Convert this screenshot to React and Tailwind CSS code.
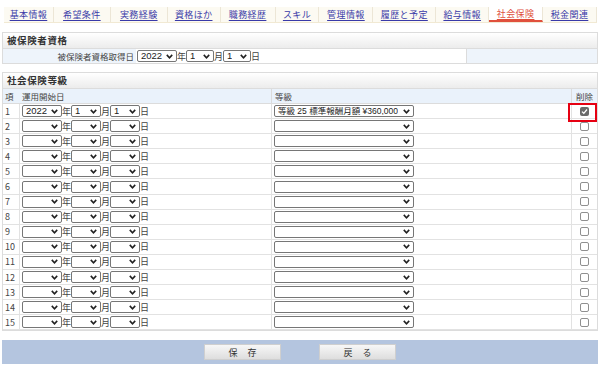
import React from 'react';

const tabs = [
  { label: '基本情報', w: 'w-[50px]' },
  { label: '希望条件', w: 'w-[57px]' },
  { label: '実務経験', w: 'w-[57px]' },
  { label: '資格ほか', w: 'w-[53px]' },
  { label: '職務経歴', w: 'w-[55px]' },
  { label: 'スキル', w: 'w-[44px]' },
  { label: '管理情報', w: 'w-[54px]' },
  { label: '履歴と予定', w: 'w-[63px]' },
  { label: '給与情報', w: 'w-[53px]' },
  { label: '社会保険', w: 'w-[54px]', active: true },
  { label: '税金関連', w: 'w-[54px]' },
];

const Chevron = () => (
  <svg width="7" height="5" viewBox="0 0 7 5" className="shrink-0">
    <path d="M0.8 0.9 L3.5 3.8 L6.2 0.9" fill="none" stroke="#222" strokeWidth="1.6" />
  </svg>
);

const Select = ({ value = '', w, size = 'text-[9.5px]' }) => (
  <div className={`${w} h-[12px] flex items-center justify-between gap-[2px] border border-[#767676] rounded-[2px] bg-white pl-[3px] pr-[3px] leading-none`}>
    <span className={`min-w-0 overflow-hidden whitespace-nowrap ${size} font-['Liberation_Sans','Noto_Sans_CJK_JP',sans-serif] text-[#222]`}>{value}</span>
    <Chevron />
  </div>
);

const DateSelects = ({ y = '', m = '', d = '', yw = 'w-[40px]', mw = 'w-[30px]' }) => (
  <div className="flex items-center leading-none text-[9px]">
    <Select value={y} w={yw} />
    <span>年</span>
    <Select value={m} w={mw} />
    <span>月</span>
    <Select value={d} w={mw} />
    <span>日</span>
  </div>
);

const Checkbox = ({ checked }) =>
  checked ? (
    <div className="w-[9px] h-[9px] rounded-[2px] bg-[#6a6a6a] flex items-center justify-center">
      <svg width="7" height="7" viewBox="0 0 7 7">
        <path d="M1 3.6 L2.8 5.3 L6 1.5" fill="none" stroke="#fff" strokeWidth="1.3" />
      </svg>
    </div>
  ) : (
    <div className="w-[9px] h-[9px] rounded-[2px] border border-[#8f8f8f] bg-white" />
  );

export default function App() {
  const rows = Array.from({ length: 15 }, (_, i) => i + 1);

  return (
    <div className="relative w-[600px] h-[365px] bg-white text-[8.5px] text-[#444] font-['Noto_Sans_CJK_JP',sans-serif] overflow-hidden">
      {/* Tabs */}
      <div className="pt-[7px] pl-[4px] pr-[3px]">
        <div className="flex h-[16px] bg-[#fcfaf2] border-b border-[#f1e9d3]">
          {tabs.map((t) => (
            <div
              key={t.label}
              className={`${t.w} flex items-center justify-center border-r border-[#ece6d6] text-[9px] tracking-[0.4px] leading-none underline underline-offset-[2px] ${
                t.active ? 'bg-white text-[#e0503c] border-b-2 border-b-[#e0503c] decoration-[#e0503c]' : 'text-[#3a3aa8]'
              }`}
            >
              {t.label}
            </div>
          ))}
        </div>
      </div>

      {/* 被保険者資格 */}
      <div className="mx-[2px] mt-[9px] border border-[#dcdcdc]">
        <div className="h-[16px] flex items-center px-[4px] bg-gradient-to-b from-white to-[#ececec] border-b border-[#dcdcdc] font-bold text-[9.5px] tracking-[0.6px] leading-none text-[#333]">
          被保険者資格
        </div>
        <div className="flex h-[14px]">
          <div className="w-[133px] bg-[#eef4fb] flex items-center justify-end pr-[2px] leading-none">
            被保険者資格取得日
          </div>
          <div className="w-[330px] flex items-center pl-[1px]">
            <DateSelects y="2022" m="1" d="1" yw="w-[40px]" mw="w-[28px]" />
          </div>
          <div className="flex-1 bg-[#eef4fb] border-l border-[#dcdcdc]" />
        </div>
      </div>

      {/* 社会保険等級 */}
      <div className="relative mx-[2px] mt-[8px] border border-[#dcdcdc]">
        <div className="h-[16px] flex items-center px-[4px] bg-gradient-to-b from-white to-[#ececec] border-b border-[#dcdcdc] font-bold text-[9.5px] tracking-[0.6px] leading-none text-[#333]">
          社会保険等級
        </div>
        <div className="grid grid-cols-[16px_252px_300px_1fr] h-[15px] bg-[#eaf2fb] border-b border-[#dcdcdc] leading-none">
          <div className="flex items-center pl-[2px]">項</div>
          <div className="flex items-center pl-[3px]">運用開始日</div>
          <div className="flex items-center pl-[3px] border-l border-[#dcdcdc]">等級</div>
          <div className="flex items-center justify-center border-l border-[#dcdcdc]">削除</div>
        </div>
        {rows.map((n) => (
          <div
            key={n}
            className="grid grid-cols-[16px_252px_300px_1fr] h-[15.1px] border-b border-[#e2e2e2] last:border-b-0 leading-none"
          >
            <div className="flex items-center pl-[2px] text-[9px]">{n}</div>
            <div className="flex items-center pl-[2px] border-l border-[#e2e2e2]">
              {n === 1 ? <DateSelects y="2022" m="1" d="1" /> : <DateSelects />}
            </div>
            <div className="flex items-center pl-[2px] border-l border-[#e2e2e2]">
              <Select w="w-[140px]" size="text-[8.5px]" value={n === 1 ? '等級 25 標準報酬月額 ¥360,000' : ''} />
            </div>
            <div className="flex items-center justify-center border-l border-[#e2e2e2]">
              <Checkbox checked={n === 1} />
            </div>
          </div>
        ))}
        <div className="absolute left-[565px] top-[30px] w-[29px] h-[19px] border-2 border-[#e60012]" />
      </div>

      {/* Buttons */}
      <div className="mx-[2px] mt-[9px] h-[24px] bg-[#b4c5df] flex items-center justify-center gap-[38px]">
        <div className="w-[77px] h-[16px] flex items-center justify-center bg-gradient-to-b from-[#f7f7f7] to-[#dedede] border border-[#cfcfcf] text-[9px] tracking-[10px] pl-[10px] leading-none text-[#333]">
          保存
        </div>
        <div className="w-[77px] h-[16px] flex items-center justify-center bg-gradient-to-b from-[#f7f7f7] to-[#dedede] border border-[#cfcfcf] text-[9px] tracking-[10px] pl-[10px] leading-none text-[#333]">
          戻る
        </div>
      </div>
    </div>
  );
}
